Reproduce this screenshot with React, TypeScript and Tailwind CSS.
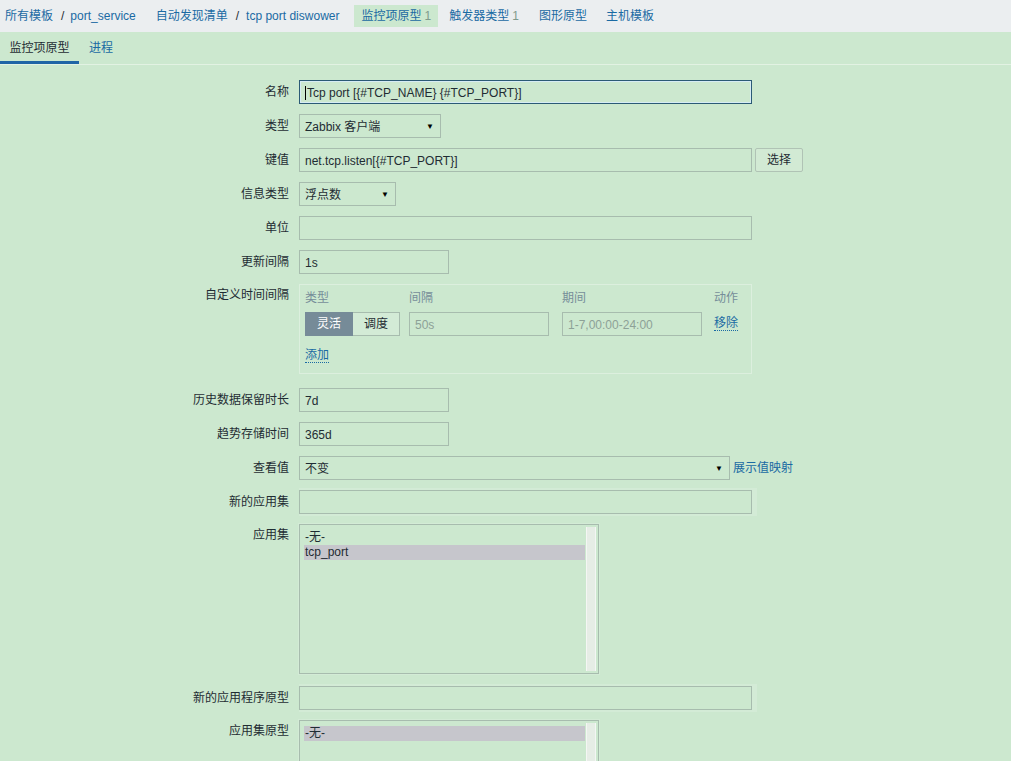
import { ReactNode } from 'react';

const font = { fontFamily: '"Liberation Sans", Arial, "Noto Sans CJK SC", sans-serif' };

function Row({ label, children, top = false, className = '' }: { label: string; children: ReactNode; top?: boolean; className?: string }) {
  return (
    <div className={`flex gap-[10px] ${top ? 'items-start' : 'items-center'} ${className}`}>
      <div className={`w-[289px] shrink-0 text-right text-[#1f2c33] ${top ? 'pt-[4px]' : ''}`}>{label}</div>
      {children}
    </div>
  );
}

function Input({ value = '', w = 'w-[453px]', focus = false, disabled = false }: { value?: string; w?: string; focus?: boolean; disabled?: boolean }) {
  return (
    <div
      className={`${w} h-[24px] flex items-center px-[5px] pt-[2px] border ${
        focus ? 'border-[#2b5a76] shadow-[inset_0_0_0_1px_#d6ecf4]' : 'border-[#a7bcae]'
      } ${disabled ? 'text-[#8da197]' : 'text-[#1f2c33]'} bg-[#cce8cf] whitespace-nowrap overflow-hidden`}
    >
      {focus && <span className="w-px h-[14px] bg-black mr-[1px]" />}
      {value}
    </div>
  );
}

function Select({ value, w }: { value: string; w: string }) {
  return (
    <div className={`${w} h-[24px] flex items-center justify-between pl-[5px] pr-[6px] pt-[2px] border border-[#a7bcae] text-[#1f2c33] bg-[#cce8cf]`}>
      <span>{value}</span>
      <span className="text-[8px] text-black leading-none">▼</span>
    </div>
  );
}

function ListBox({ items, selected }: { items: string[]; selected: string }) {
  return (
    <div className="p-[1px] bg-[#d3ebd6]">
      <div className="w-[300px] h-[150px] border border-[#a7bcae] bg-[#cce8cf] flex">
        <div className="flex-1 pl-[4px] pr-[1px] pt-[5px]">
          {items.map((it) => (
            <div
              key={it}
              className={`h-[15px] leading-[15px] pl-[1px] text-[#1f2c33] ${it === selected ? 'bg-[#c6c6cc]' : ''}`}
            >
              {it}
            </div>
          ))}
        </div>
        <div className="w-[10px] mr-[2px] my-[2px] bg-[#e6ede6] border-x border-[#f4f6f4]" />
      </div>
    </div>
  );
}

export default function App() {
  const crumbs = (
    <div className="h-[32px] bg-[#ebeef0] flex items-center text-[#1a6aa3] pl-[5px] whitespace-nowrap">
      <span>所有模板</span>
      <span className="ml-[8px] mr-[6px] text-[#1f2c33]">/</span>
      <span>port_service</span>
      <span className="ml-[20px]">自动发现清单</span>
      <span className="ml-[8px] mr-[7px] text-[#1f2c33]">/</span>
      <span>tcp port diswower</span>
      <span className="ml-[15px] px-[7px] h-[22px] flex items-center bg-[#cce8cf]">
        监控项原型<span className="ml-[3px] text-[#7f9a8c]">1</span>
      </span>
      <span className="ml-[11px]">
        触发器类型<span className="ml-[3px] text-[#7f9a8c]">1</span>
      </span>
      <span className="ml-[20px]">图形原型</span>
      <span className="ml-[19px]">主机模板</span>
    </div>
  );

  return (
    <div className="w-[1011px] h-[761px] overflow-hidden bg-[#cce8cf] text-[12px] leading-[14px]" style={font}>
      {crumbs}
      <div className="h-[33px] flex items-stretch border-b border-[#e2f2e3]">
        <div className="w-[79px] flex items-center justify-center text-[#1f2c33] border-b-[3px] border-[#1f65a6] pt-[2px]">监控项原型</div>
        <div className="ml-[10px] flex items-center text-[#1a6aa3] pb-[1px]">进程</div>
      </div>

      <div className="pt-[15px] flex flex-col gap-[10px]">
        <Row label="名称">
          <Input value="Tcp port [{#TCP_NAME} {#TCP_PORT}]" focus />
        </Row>
        <Row label="类型">
          <Select value="Zabbix 客户端" w="w-[142px]" />
        </Row>
        <Row label="键值">
          <Input value="net.tcp.listen[{#TCP_PORT}]" />
          <div className="-ml-[7px] w-[48px] h-[24px] flex items-center justify-center border border-[#b0c3b5] rounded-[2px] text-[#1f2c33] bg-[#d2ead4]">选择</div>
        </Row>
        <Row label="信息类型">
          <Select value="浮点数" w="w-[97px]" />
        </Row>
        <Row label="单位">
          <Input />
        </Row>
        <Row label="更新间隔">
          <Input value="1s" w="w-[150px]" />
        </Row>
        <Row label="自定义时间间隔" top>
          <div className="w-[453px] h-[90px] border border-[#dcefde] px-[5px] pt-[6px]">
            <div className="flex text-[#768d99] h-[14px]">
              <span className="w-[104px]">类型</span>
              <span className="w-[153px]">间隔</span>
              <span className="w-[152px]">期间</span>
              <span>动作</span>
            </div>
            <div className="flex items-center mt-[7px]">
              <div className="flex h-[24px] w-[95px]">
                <div className="w-[48px] flex items-center justify-center bg-[#768b98] text-white border border-[#768b98]">灵活</div>
                <div className="w-[47px] flex items-center justify-center border border-[#a7bcae] border-l-0 text-[#1f2c33] bg-[#d3ebd6]">调度</div>
              </div>
              <div className="ml-[9px]">
                <Input value="50s" w="w-[140px]" disabled />
              </div>
              <div className="ml-[13px]">
                <Input value="1-7,00:00-24:00" w="w-[140px]" disabled />
              </div>
              <span className="ml-[12px] text-[#1a6aa3] border-b border-dotted border-[#1a6aa3] leading-[13px]">移除</span>
            </div>
            <div className="mt-[12px]">
              <span className="text-[#1a6aa3] border-b border-dotted border-[#1a6aa3] leading-[13px]">添加</span>
            </div>
          </div>
        </Row>
        <Row label="历史数据保留时长" className="mt-[4px]">
          <Input value="7d" w="w-[150px]" />
        </Row>
        <Row label="趋势存储时间">
          <Input value="365d" w="w-[150px]" />
        </Row>
        <Row label="查看值">
          <Select value="不变" w="w-[431px]" />
          <span className="-ml-[7px] text-[#1a6aa3]">展示值映射</span>
        </Row>
        <Row label="新的应用集">
          <div className="pr-[5px] py-[2px] -my-[2px] bg-[#d3ebd6]">
            <Input />
          </div>
        </Row>
        <Row label="应用集" top>
          <div className="-m-[1px]">
            <ListBox items={['-无-', 'tcp_port']} selected="tcp_port" />
          </div>
        </Row>
        <Row label="新的应用程序原型" className="mt-[2px]">
          <div className="pr-[5px] py-[2px] -my-[2px] bg-[#d3ebd6]">
            <Input />
          </div>
        </Row>
        <Row label="应用集原型" top>
          <div className="-m-[1px]">
            <ListBox items={['-无-']} selected="-无-" />
          </div>
        </Row>
      </div>
    </div>
  );
}
